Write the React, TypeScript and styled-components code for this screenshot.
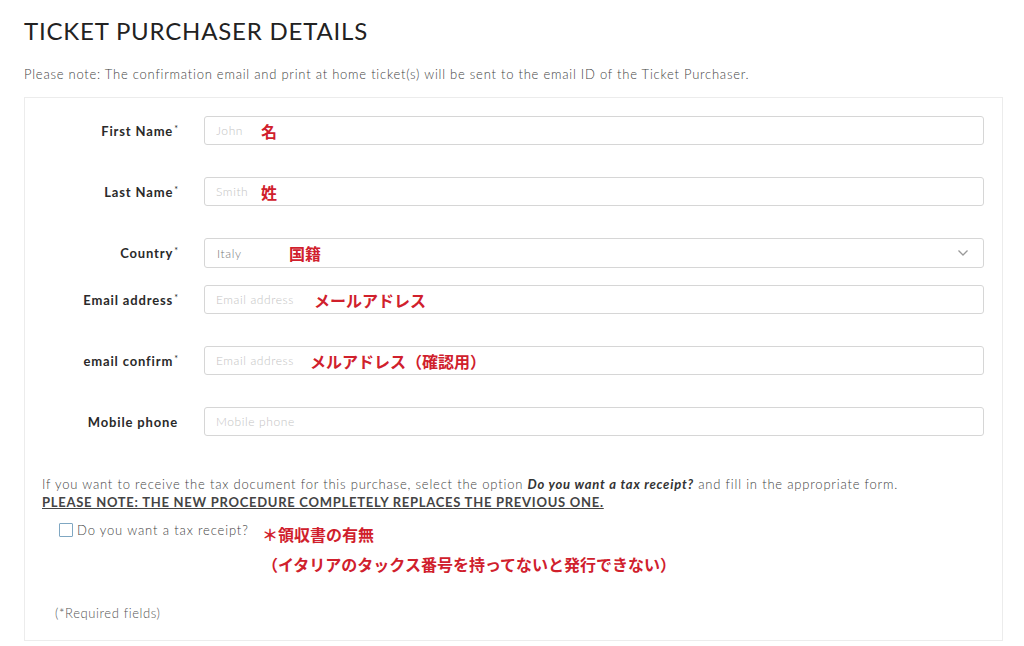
import { createGlobalStyle, styled } from 'styled-components';

const GlobalStyle = createGlobalStyle`
  html, body {
    margin: 0;
    padding: 0;
    background: #ffffff;
  }
  body {
    font-family: Lato, "Noto Sans", "Noto Sans CJK JP", sans-serif;
    color: #333333;
  }
`;

const fields = [
  { label: 'First Name', required: true, placeholder: 'John', note: '名', noteLeft: 57, space: 32 },
  { label: 'Last Name', required: true, placeholder: 'Smith', note: '姓', noteLeft: 57, space: 32 },
  { label: 'Country', required: true, placeholder: 'Italy', note: '国籍', noteLeft: 85, space: 17, select: true },
  { label: 'Email address', required: true, placeholder: 'Email address', note: 'メールアドレス', noteLeft: 110, space: 32 },
  { label: 'email confirm', required: true, placeholder: 'Email address', note: 'メルアドレス（確認用）', noteLeft: 106, space: 32 },
  { label: 'Mobile phone', required: false, placeholder: 'Mobile phone', note: '', noteLeft: 0, space: 0 },
];

export default function App() {
  return (
    <Page>
      <GlobalStyle />
      <Title>TICKET PURCHASER DETAILS</Title>
      <Note>
        Please note: The confirmation email and print at home ticket(s) will be sent to the email ID of the Ticket Purchaser.
      </Note>
      <Panel>
        <Fields>
          {fields.map((f) => (
            <Row key={f.label} $space={f.space}>
              <Label>
                {f.label}
                {f.required && <Star>*</Star>}
              </Label>
              <InputBox>
                {f.select ? (
                  <SelectBox>
                    <span>{f.placeholder}</span>
                    <svg width="12" height="8" viewBox="0 0 12 8">
                      <path d="M1.5 1.5 L6 6 L10.5 1.5" fill="none" stroke="#999" strokeWidth="1.3" />
                    </svg>
                  </SelectBox>
                ) : (
                  <TextInput placeholder={f.placeholder} />
                )}
                {f.note && <Annotation style={{ left: f.noteLeft }}>{f.note}</Annotation>}
              </InputBox>
            </Row>
          ))}
        </Fields>

        <TaxText>
          If you want to receive the tax document for this purchase, select the option{' '}
          <strong><em>Do you want a tax receipt?</em></strong> and fill in the appropriate form.
        </TaxText>
        <Warning>PLEASE NOTE: THE NEW PROCEDURE COMPLETELY REPLACES THE PREVIOUS ONE.</Warning>

        <CheckRow>
          <CheckLabel>
            <Checkbox type="checkbox" />
            Do you want a tax receipt?
          </CheckLabel>
          <AnnotationBlock>
            <div>＊領収書の有無</div>
            <div>（イタリアのタックス番号を持ってないと発行できない）</div>
          </AnnotationBlock>
        </CheckRow>

        <Required>(*Required fields)</Required>
      </Panel>
    </Page>
  );
}

const Page = styled.div`
  width: 1024px;
  height: 646px;
  padding: 18px 21px 0 24px;
  box-sizing: border-box;
  overflow: hidden;
`;

const Title = styled.h1`
  margin: 0;
  font-size: 24px;
  font-weight: 400;
  color: #222222;
  letter-spacing: 0.8px;
  line-height: 26px;
`;

const Note = styled.p`
  margin: 22px 0 0 0;
  font-size: 13px;
  font-weight: 300;
  color: #444444;
  line-height: 16px;
  letter-spacing: 0.76px;
`;

const Panel = styled.div`
  margin-top: 15px;
  border: 1px solid #ececec;
  padding: 18px 18px 20px 17px;
  height: 544px;
  box-sizing: border-box;
`;

const Fields = styled.div`
  display: flex;
  flex-direction: column;
`;

const Row = styled.div<{ $space: number }>`
  display: grid;
  grid-template-columns: 136px 1fr;
  column-gap: 26px;
  align-items: center;
  margin-bottom: ${(p) => p.$space}px;
`;

const Label = styled.label`
  text-align: right;
  font-size: 13px;
  font-weight: 700;
  color: #2a2a2a;
  letter-spacing: 0.85px;
`;

const Star = styled.sup`
  font-size: 9px;
  font-weight: 400;
  vertical-align: 4px;
  margin-left: 1px;
  letter-spacing: 0;
`;

const InputBox = styled.div`
  position: relative;
`;

const TextInput = styled.input`
  display: block;
  width: 100%;
  height: 29px;
  box-sizing: border-box;
  border: 1px solid #d6d6d6;
  border-radius: 3px;
  padding: 0 11px;
  font-family: Lato, "Noto Sans", sans-serif;
  font-size: 12px;
  font-weight: 300;
  letter-spacing: 0.6px;
  color: #333333;
  outline: none;
  &::placeholder {
    color: #c4c4c4;
  }
`;

const SelectBox = styled.div`
  height: 30px;
  box-sizing: border-box;
  border: 1px solid #d6d6d6;
  border-radius: 3px;
  padding: 0 14px 0 12px;
  display: flex;
  align-items: center;
  justify-content: space-between;
  font-size: 12px;
  font-weight: 300;
  letter-spacing: 0.6px;
  color: #777777;
`;

const Annotation = styled.span`
  position: absolute;
  top: 50%;
  transform: translateY(-50%);
  font-family: "Noto Sans CJK JP", sans-serif;
  font-size: 16px;
  font-weight: 700;
  color: #d0202c;
  pointer-events: none;
  white-space: nowrap;
`;

const TaxText = styled.p`
  margin: 39px 0 0 0;
  font-size: 13px;
  font-weight: 300;
  color: #444444;
  line-height: 18px;
  letter-spacing: 0.8px;
  strong {
    font-weight: 700;
    color: #333333;
  }
`;

const Warning = styled.p`
  margin: 0;
  font-size: 13px;
  font-weight: 700;
  color: #444444;
  text-decoration: underline;
  line-height: 18px;
  letter-spacing: 0.73px;
`;

const CheckRow = styled.div`
  display: flex;
  align-items: flex-start;
  margin-top: 11px;
  padding-left: 17px;
`;

const CheckLabel = styled.label`
  display: flex;
  align-items: center;
  gap: 4px;
  font-size: 13px;
  font-weight: 300;
  color: #444444;
  height: 16px;
  width: 203px;
  letter-spacing: 0.85px;
`;

const Checkbox = styled.input`
  appearance: none;
  width: 14px;
  height: 14px;
  margin: 0;
  border: 1px solid #7fa7c2;
  border-radius: 1px;
  background: #ffffff;
`;

const AnnotationBlock = styled.div`
  margin-top: -3px;
  font-family: "Noto Sans CJK JP", sans-serif;
  font-size: 16px;
  font-weight: 700;
  color: #d0202c;
  line-height: 30px;
`;

const Required = styled.p`
  margin: 26px 0 0 13px;
  font-size: 13px;
  font-weight: 300;
  color: #555555;
  letter-spacing: 0.6px;
`;
